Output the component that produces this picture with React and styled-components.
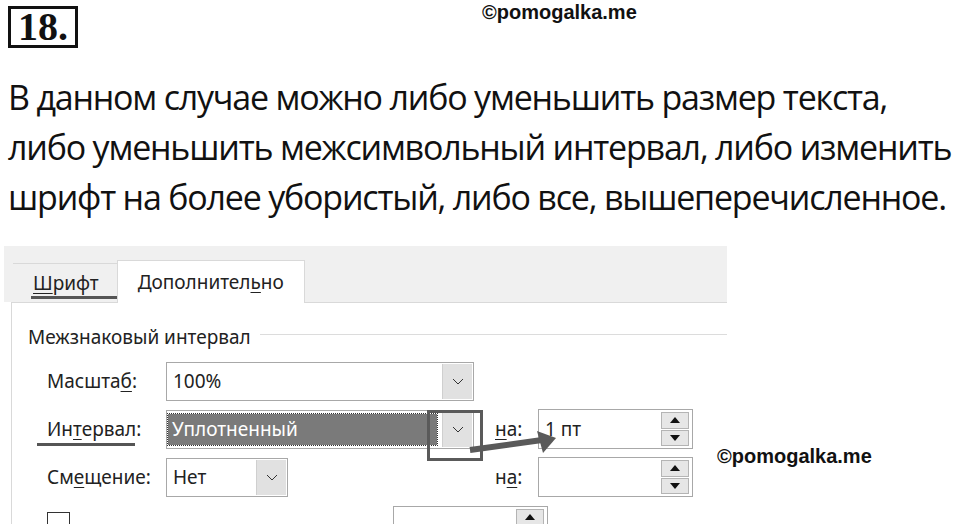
import React from 'react'
import styled, { createGlobalStyle } from 'styled-components'

const Global = createGlobalStyle`
  html, body { margin: 0; padding: 0; background: #fff; }
  body { width: 960px; height: 524px; overflow: hidden; position: relative; }
`

const Page = styled.div`
  position: relative;
  width: 960px;
  height: 524px;
  overflow: hidden;
`

const Header = styled.div`
  display: flex;
  align-items: flex-start;
  padding: 6px 0 0 8px;
  height: 42px;
`

const Number = styled.div`
  border: 3px solid #111;
  width: 64px;
  height: 36px;
  box-sizing: content-box;
  font-family: "Liberation Serif", serif;
  font-weight: bold;
  font-size: 40px;
  line-height: 36px;
  text-align: center;
  color: #111;
`

const Watermark = styled.div`
  font-family: "Liberation Sans", Arial, sans-serif;
  font-weight: bold;
  font-size: 20px;
  color: #111;
  margin-left: 404px;
  margin-top: -5px;
`

const Paragraph = styled.div`
  margin: 24px 0 0 8px;
  font-family: "Open Sans", sans-serif;
  font-size: 34px;
  line-height: 50px;
  color: #111;
  letter-spacing: -1.2px;
  white-space: nowrap;
`

const Line = styled.div``

const Dialog = styled.div`
  position: relative;
  margin: 24px 0 0 4px;
  width: 723px;
  font-family: "Noto Sans", sans-serif;
  font-size: 19px;
  color: #222;
`

const TabBar = styled.div`
  display: flex;
  align-items: flex-end;
  height: 56px;
  background: #f0f0f0;
  padding-left: 9px;
`

const Tab = styled.div`
  position: relative;
  z-index: 1;
  box-sizing: border-box;
  height: ${p => (p.$active ? '43px' : '39px')};
  margin-bottom: ${p => (p.$active ? '-1px' : '0')};
  padding: ${p => (p.$active ? '8px 20px 0 20px' : '6px 18px 0 20px')};
  background: ${p => (p.$active ? '#fff' : 'transparent')};
  border: 1px solid #d9d9d9;
  border-bottom: none;
  border-right: ${p => (p.$active ? '1px solid #d9d9d9' : 'none')};
  border-left: ${p => (p.$active ? '1px solid #d9d9d9' : 'none')};
  line-height: 26px;
`

const Key = styled.span`
  text-decoration: underline;
  text-underline-offset: 3px;
`

const Panel = styled.div`
  background: #fff;
  border-top: 1px solid #d9d9d9;
  border-left: 1px solid #d9d9d9;
  margin-left: 7px;
  padding: 21px 0 0 16px;
  height: 240px;
`

const Group = styled.div`
  display: flex;
  align-items: center;
  gap: 9px;
  line-height: 26px;
`

const GroupLine = styled.div`
  flex: 1;
  height: 1px;
  background: #dcdcdc;
  margin-top: -6px;
`

const Rows = styled.div`
  display: grid;
  grid-template-columns: 119px 308px 64px 156px;
  grid-auto-rows: 38px;
  row-gap: 10px;
  margin: 12px 0 0 19px;
  align-items: center;
`

const Label = styled.div`
  white-space: nowrap;
`

const NaLabel = styled(Label)`
  padding-left: 21px;
`

const Combo = styled.div`
  box-sizing: border-box;
  display: flex;
  align-items: stretch;
  height: 39px;
  width: ${p => p.$w || '308px'};
  border: 1px solid #a8a8a8;
  background: #fff;
`

const ComboText = styled.div`
  flex: 1;
  display: flex;
  align-items: center;
  padding-left: 6px;
`

const Selected = styled.div`
  flex: 1;
  margin: 3px 4px 3px 1px;
  display: flex;
  align-items: center;
  padding-left: 4px;
  background: #7a7a7a;
  color: #fff;
  outline: 1px dotted #333;
`

const DropButton = styled.div`
  width: 29px;
  margin: 1px;
  background: #e1e1e1;
  border-left: 1px solid #cfcfcf;
  display: flex;
  align-items: center;
  justify-content: center;
`

const Spin = styled.div`
  box-sizing: border-box;
  display: flex;
  height: 40px;
  width: 155px;
  margin-left: ${p => p.$offset || 0}px;
  border: 1px solid #a8a8a8;
  background: #fff;
`

const SpinText = styled.div`
  flex: 1;
  display: flex;
  align-items: center;
  padding-left: 6px;
`

const SpinButtons = styled.div`
  width: 28px;
  margin: 2px 3px 2px 0;
  display: flex;
  flex-direction: column;
  gap: 1px;
`

const SpinHalf = styled.div`
  flex: 1;
  background: #e6e6e6;
  border: 1px solid #b4b4b4;
  display: flex;
  align-items: center;
  justify-content: center;
`

const LastRow = styled.div`
  grid-column: 1 / -1;
  align-self: start;
  display: flex;
  align-items: flex-start;
`

const Checkbox = styled.div`
  width: 21px;
  height: 21px;
  border: 1px solid #333;
  background: #fff;
  margin-top: 6px;
`

const Highlight = styled.div`
  position: absolute;
  left: 423px;
  top: 164px;
  width: 50px;
  height: 45px;
  border: 3px solid #5a5a5a;
`

const Underline = styled.div`
  position: absolute;
  left: ${p => p.$x}px;
  top: ${p => p.$y}px;
  width: ${p => p.$w}px;
  height: 3px;
  background: #555;
`

const ArrowSvg = styled.svg`
  position: absolute;
  left: 460px;
  top: 170px;
`

const Watermark2 = styled.div`
  position: absolute;
  left: 717px;
  top: 445px;
  font-family: "Liberation Sans", Arial, sans-serif;
  font-weight: bold;
  font-size: 20px;
  color: #111;
`

const Chevron = () => (
  <svg width="12" height="7" viewBox="0 0 12 7">
    <path d="M1 1 L6 6 L11 1" fill="none" stroke="#333" strokeWidth="1" />
  </svg>
)

const Tri = ({ down }) => (
  <svg width="10" height="6" viewBox="0 0 10 6">
    <path d={down ? 'M0 0 H10 L5 6 Z' : 'M0 6 H10 L5 0 Z'} fill="#111" />
  </svg>
)

const SpinBox = ({ value, offset }) => (
  <Spin $offset={offset}>
    <SpinText>{value}</SpinText>
    <SpinButtons>
      <SpinHalf><Tri /></SpinHalf>
      <SpinHalf><Tri down /></SpinHalf>
    </SpinButtons>
  </Spin>
)

export default function App() {
  return (
    <Page>
      <Global />
      <Header>
        <Number>18.</Number>
        <Watermark>©pomogalka.me</Watermark>
      </Header>
      <Paragraph>
        <Line>В данном случае можно либо уменьшить размер текста,</Line>
        <Line>либо уменьшить межсимвольный интервал, либо изменить</Line>
        <Line>шрифт на более убористый, либо все, вышеперечисленное.</Line>
      </Paragraph>
      <Dialog>
        <TabBar>
          <Tab><Key>Ш</Key>рифт</Tab>
          <Tab $active>Дополнител<Key>ь</Key>но</Tab>
        </TabBar>
        <Panel>
          <Group>
            <span>Межзнаковый интервал</span>
            <GroupLine />
          </Group>
          <Rows>
            <Label>Масшта<Key>б</Key>:</Label>
            <Combo>
              <ComboText>100%</ComboText>
              <DropButton><Chevron /></DropButton>
            </Combo>
            <div />
            <div />

            <Label>Ин<Key>т</Key>ервал:</Label>
            <Combo>
              <Selected>Уплотненный</Selected>
              <DropButton><Chevron /></DropButton>
            </Combo>
            <NaLabel><Key>н</Key>а:</NaLabel>
            <SpinBox value="1 пт" />

            <Label>См<Key>е</Key>щение:</Label>
            <Combo $w="122px">
              <ComboText>Нет</ComboText>
              <DropButton><Chevron /></DropButton>
            </Combo>
            <NaLabel>н<Key>а</Key>:</NaLabel>
            <SpinBox value="" />

            <LastRow>
              <Checkbox />
              <SpinBox value="" offset={323} />
            </LastRow>
          </Rows>
        </Panel>
        <Underline $x={27} $y={50} $w={88} />
        <Underline $x={33} $y={197} $w={98} />
        <Highlight />
        <ArrowSvg width="100" height="46" viewBox="0 0 100 46">
          <path d="M6 34 L78 24" stroke="#5a5a5a" strokeWidth="6" fill="none" />
          <path d="M73 15 L92 22 L79 37 Z" fill="#5a5a5a" />
        </ArrowSvg>
      </Dialog>
      <Watermark2>©pomogalka.me</Watermark2>
    </Page>
  )
}
